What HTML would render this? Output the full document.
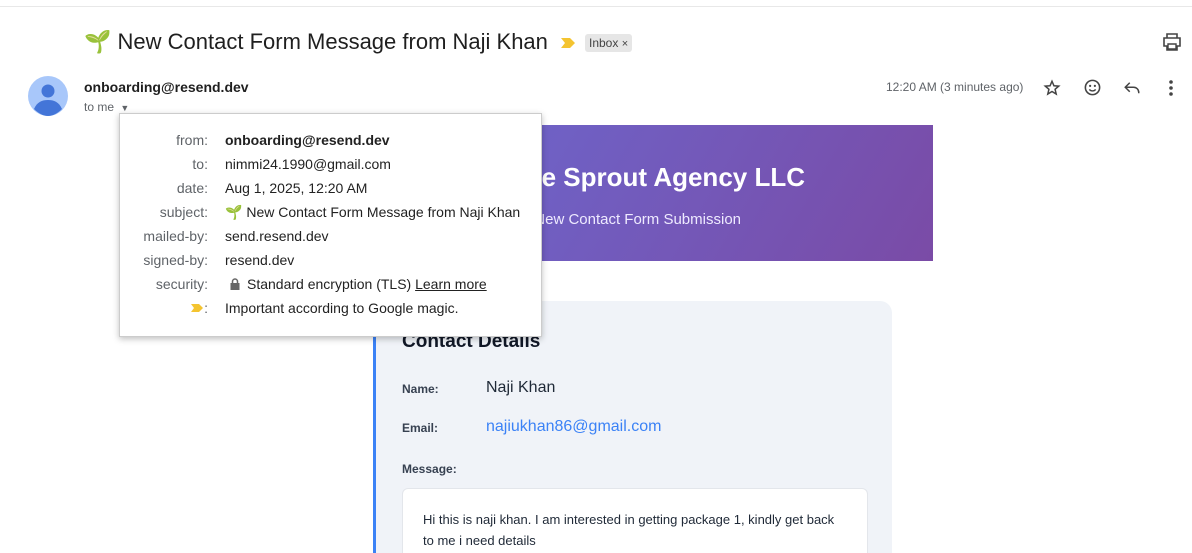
<!DOCTYPE html>
<html><head><meta charset="utf-8"><style>
*{margin:0;padding:0;box-sizing:border-box}
html,body{width:1192px;height:553px;overflow:hidden}
body{background:#fff;font-family:"Liberation Sans",Arial,sans-serif;position:relative;color:#1f1f1f}
.a{position:absolute}
.topline{left:0;top:6px;width:1192px;height:1px;background:#e8e8e8}
.subject{left:84px;top:29px;font-size:22px;color:#1f1f1f;white-space:nowrap}
.inbox{left:585px;top:34px;background:#e6e6e6;font-size:12px;color:#444;padding:2px 4px;border-radius:3px}
.pop{left:119px;top:113px;width:423px;height:224px;background:#fff;border:1px solid #ccc;box-shadow:0 2px 6px rgba(0,0,0,.25);z-index:5}
.pop .r{position:absolute;font-size:14px;white-space:nowrap}
.pop .l{right:333px;color:#5f6368;text-align:right}
.pop .v{left:105px;color:#222}
.banner{left:333px;top:125px;width:600px;height:136px;background:linear-gradient(120deg,#6a6bd3,#7a4ba6);color:#fff}
.card{left:373px;top:301px;width:519px;height:260px;background:#f0f3f8;border-radius:0 12px 0 0;border-left:3px solid #3b82f6}
.card .lb{position:absolute;left:26px;font-size:12px;font-weight:bold;color:#374151}
.msg{position:absolute;left:26px;top:187px;width:466px;height:90px;background:#fff;border:1px solid #e3e6eb;border-radius:6px;padding:20px 20px;font-size:13px;line-height:21px;color:#1f2937}
</style></head><body>
<div class="a topline"></div>
<div class="a subject"><span style="color:#5cae3a">🌱</span> New Contact Form Message from Naji Khan</div>
<svg class="a" style="left:560px;top:37px" width="16" height="12"><path d="M1 1h9l5 5-5 5H1l4-5z" fill="#f4c430"/></svg>
<div class="a inbox">Inbox <span style="font-size:11px">×</span></div>
<svg class="a" style="left:1162px;top:33px" width="20" height="18" viewBox="0 0 20 18"><path d="M5 1h10v4H5zM2 5h16v8h-3v4H5v-4H2z" fill="none" stroke="#444" stroke-width="1.6"/><path d="M6 11h8v5H6z" fill="#fff" stroke="#444" stroke-width="1.4"/></svg>
<svg class="a" style="left:28px;top:76px" width="40" height="40"><circle cx="20" cy="20" r="20" fill="#a8c7fa"/><circle cx="20" cy="15" r="6.5" fill="#4375d8"/><path d="M6 33c3-7 8-9 14-9s11 2 14 9c-4 4-9 7-14 7S10 37 6 33z" fill="#4375d8"/></svg>
<div class="a" style="left:84px;top:79px;font-size:14px;font-weight:bold;color:#1f1f1f">onboarding@resend.dev</div>
<div class="a" style="left:84px;top:100px;font-size:12px;color:#5f6368">to me <span style="font-size:9px;margin-left:3px">▼</span></div>
<div class="a" style="left:886px;top:80px;font-size:12px;color:#5f6368">12:20 AM (3 minutes ago)</div>
<svg class="a" style="left:1043px;top:79px" width="18" height="18" viewBox="0 0 24 24"><path d="M12 3l2.6 6 6.4.5-4.9 4.2 1.5 6.3L12 16.6 6.4 20l1.5-6.3L3 9.5 9.4 9z" fill="none" stroke="#444" stroke-width="2"/></svg>
<svg class="a" style="left:1083px;top:78px" width="19" height="19" viewBox="0 0 24 24"><circle cx="12" cy="12" r="9" fill="none" stroke="#444" stroke-width="2"/><circle cx="9" cy="10" r="1.4" fill="#444"/><circle cx="15" cy="10" r="1.4" fill="#444"/><path d="M8 14.5c2 2.5 6 2.5 8 0" fill="none" stroke="#444" stroke-width="1.8"/></svg>
<svg class="a" style="left:1123px;top:80px" width="18" height="16" viewBox="0 0 24 20"><path d="M9 3L3 9l6 6M3 9h11c4 0 7 3 7 7v1" fill="none" stroke="#444" stroke-width="2"/></svg>
<svg class="a" style="left:1168px;top:79px" width="6" height="18"><circle cx="3" cy="3" r="1.8" fill="#444"/><circle cx="3" cy="9" r="1.8" fill="#444"/><circle cx="3" cy="15" r="1.8" fill="#444"/></svg>

<div class="a banner">
<div style="position:absolute;right:128px;top:37px;font-size:26px;font-weight:bold;white-space:nowrap">The Sprout Agency LLC</div>
<div style="position:absolute;right:192px;top:86px;font-size:15px;color:#eeeaff;white-space:nowrap">New Contact Form Submission</div>
</div>

<div class="a card">
<div style="position:absolute;left:26px;top:30px;font-size:19px;font-weight:bold;color:#111827">Contact Details</div>
<div class="lb" style="top:81px">Name:</div><div style="position:absolute;left:110px;top:78px;font-size:16px;color:#1f2937">Naji Khan</div>
<div class="lb" style="top:120px">Email:</div><div style="position:absolute;left:110px;top:117px;font-size:16px;color:#3b82f6">najiukhan86@gmail.com</div>
<div class="lb" style="top:161px">Message:</div>
<div class="msg">Hi this is naji khan. I am interested in getting package 1, kindly get back to me i need details</div>
</div>

<div class="a pop">
<div class="r l" style="top:18px">from:</div><div class="r v" style="top:18px;font-weight:bold">onboarding@resend.dev</div>
<div class="r l" style="top:42px">to:</div><div class="r v" style="top:42px">nimmi24.1990@gmail.com</div>
<div class="r l" style="top:66px">date:</div><div class="r v" style="top:66px">Aug 1, 2025, 12:20 AM</div>
<div class="r l" style="top:90px">subject:</div><div class="r v" style="top:90px"><span style="color:#5cae3a">🌱</span> New Contact Form Message from Naji Khan</div>
<div class="r l" style="top:114px">mailed-by:</div><div class="r v" style="top:114px">send.resend.dev</div>
<div class="r l" style="top:138px">signed-by:</div><div class="r v" style="top:138px">resend.dev</div>
<div class="r l" style="top:162px">security:</div><div class="r v" style="top:162px"><svg width="12" height="12" style="margin:0 6px 0 4px;vertical-align:-1px"><rect x="1.5" y="5" width="9" height="7" fill="#666"/><path d="M3.5 5V3.5a2.5 2.5 0 015 0V5" fill="none" stroke="#666" stroke-width="1.5"/></svg>Standard encryption (TLS) <u>Learn more</u></div>
<div class="r l" style="top:186px"><svg width="14" height="10" style="vertical-align:0"><path d="M1 1h8l4 4-4 4H1l3-4z" fill="#f4c430"/></svg>:</div><div class="r v" style="top:186px">Important according to Google magic.</div>
</div>
</body></html>
